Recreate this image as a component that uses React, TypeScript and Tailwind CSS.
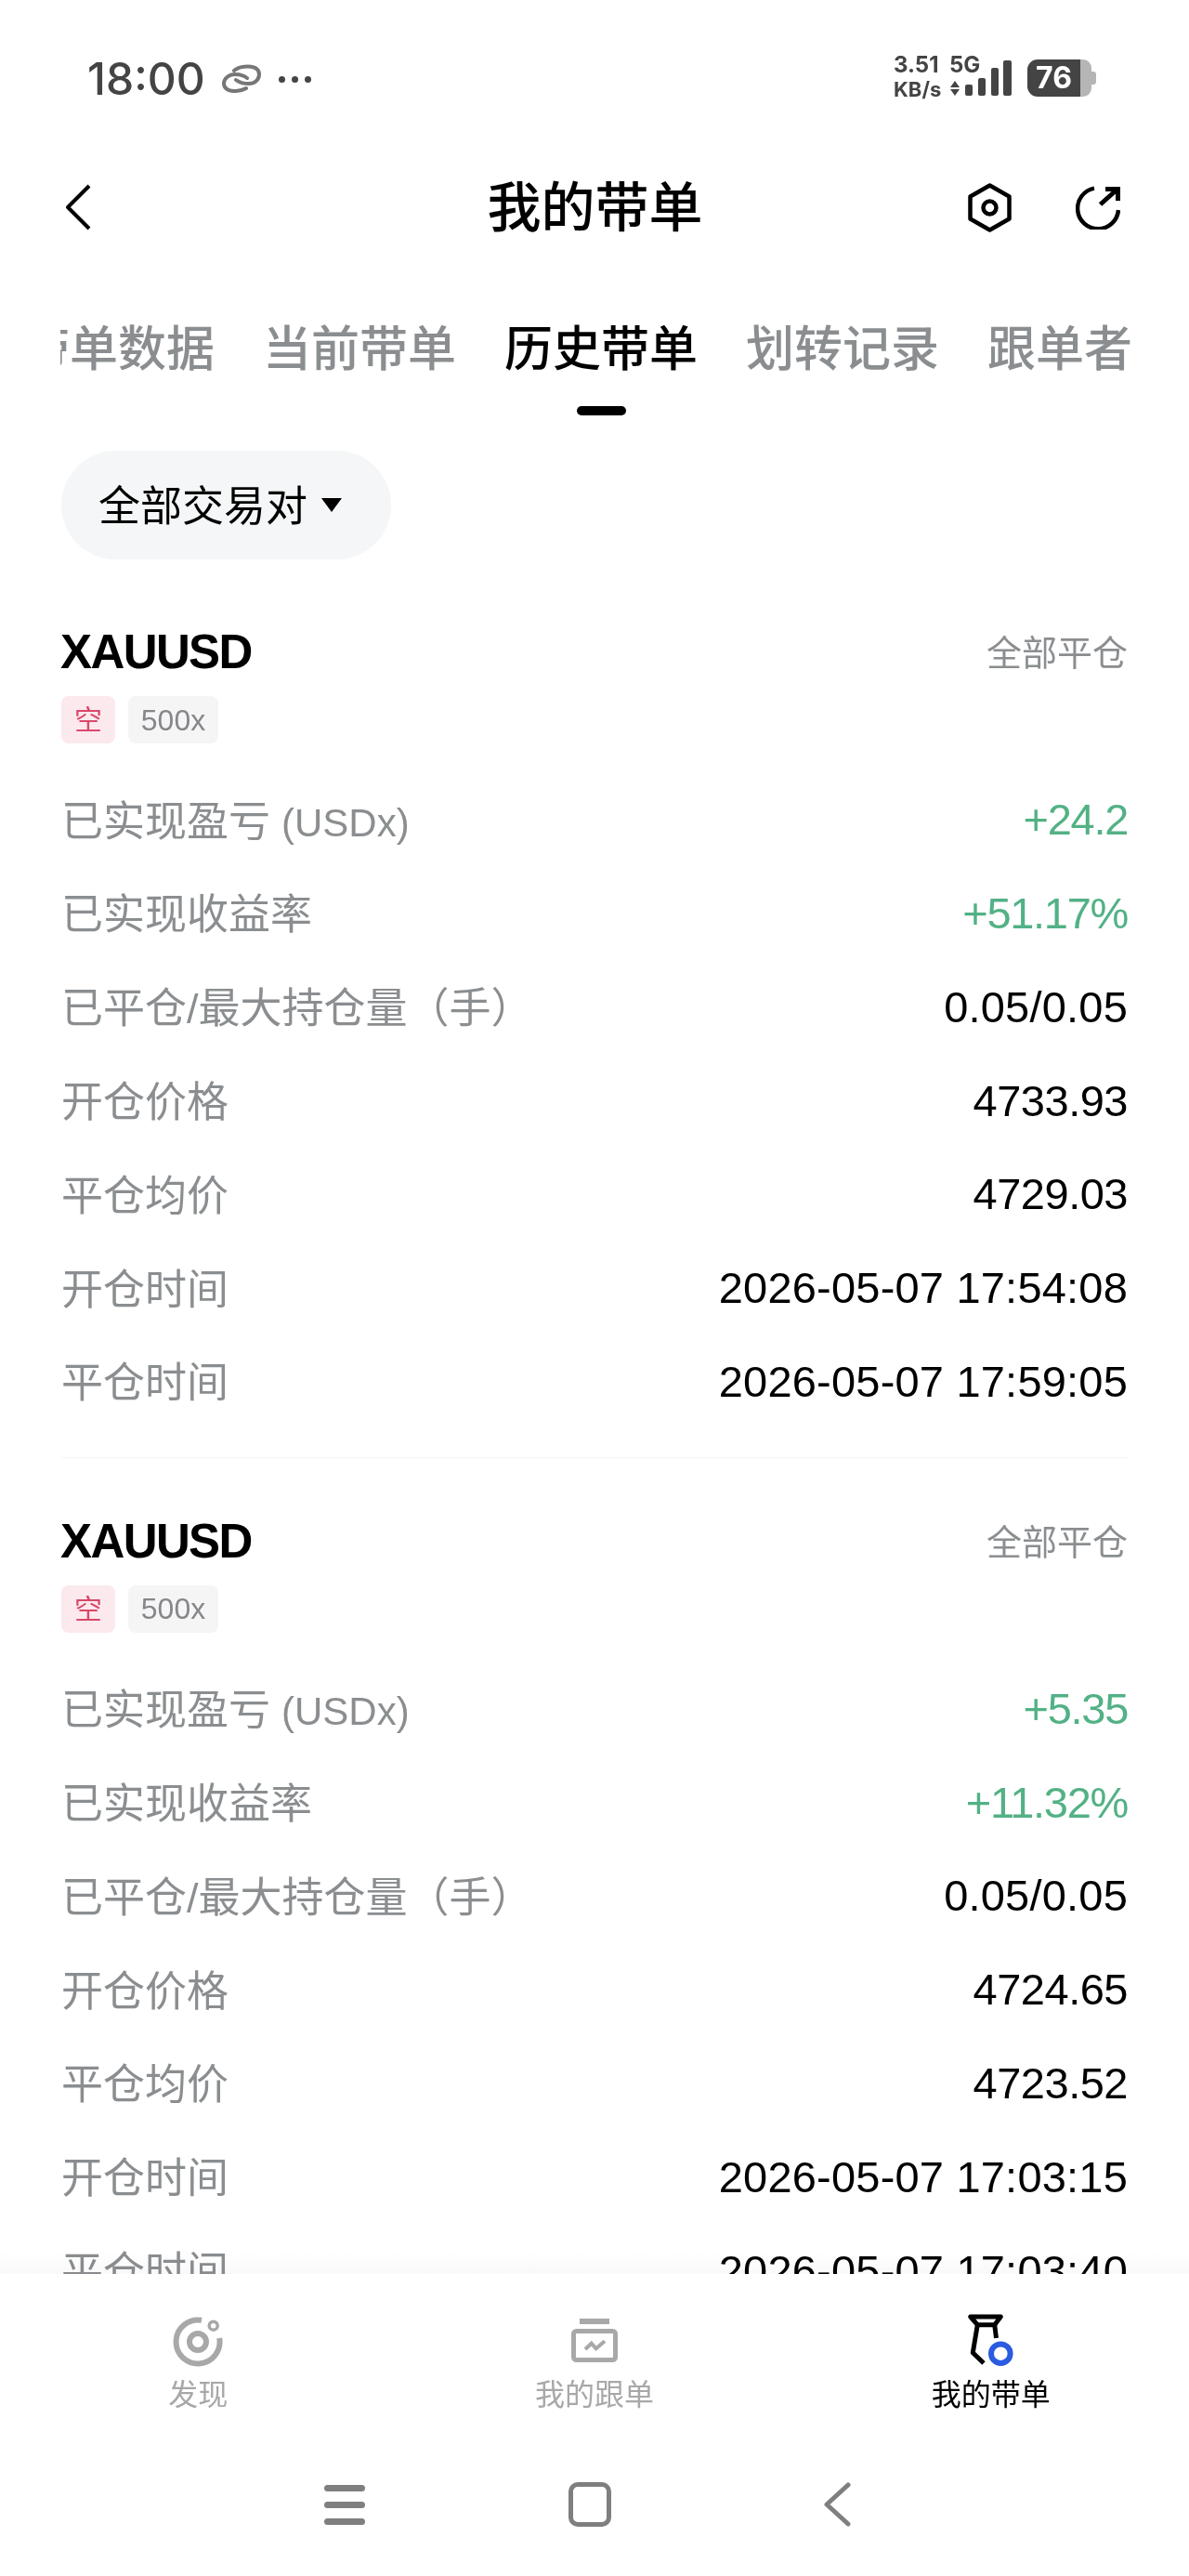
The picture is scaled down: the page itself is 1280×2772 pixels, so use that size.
const FONT = "font-['Liberation_Sans','Noto_Sans_CJK_SC',sans-serif]";

const tabs = ["带单数据", "当前带单", "历史带单", "划转记录", "跟单者"];

const trades = [
  {
    pnl: "+24.2",
    rate: "+51.17%",
    open: "4733.93",
    close: "4729.03",
    openTime: "2026-05-07 17:54:08",
    closeTime: "2026-05-07 17:59:05",
  },
  {
    pnl: "+5.35",
    rate: "+11.32%",
    open: "4724.65",
    close: "4723.52",
    openTime: "2026-05-07 17:03:15",
    closeTime: "2026-05-07 17:03:40",
  },
];

function StatusBar() {
  return (
    <div className="h-[168px] flex items-start justify-between pl-[94px] pr-[100px] pt-[57px] font-['Inter',sans-serif] text-[#444]">
      <div className="flex items-center mt-[3px]">
        <span className="text-[48px] leading-[50px] font-medium">18:00</span>
        <svg width="46" height="38" viewBox="0 0 46 38" fill="none" stroke="#777" strokeWidth="4" strokeLinecap="round" className="ml-[16px]">
          <path d="M15 10Q20 5.5 30 5.5C38 5.5 42 9 42 14C42 20 37 24 31 24C26 24 21 23 17 20" />
          <path d="M28 29Q23 32 15 32C8 32 4 28.5 4 24C4 18 10 14 16 14C21 14 25 15 29 18" />
        </svg>
        <span className="ml-[17px] flex gap-[7px]">
          <i className="size-[7px] rounded-full bg-[#444]" />
          <i className="size-[7px] rounded-full bg-[#444]" />
          <i className="size-[7px] rounded-full bg-[#444]" />
        </span>
      </div>
      <div className="flex items-start">
        <div className="w-[60px] font-bold">
          <div className="text-[24px] leading-[26px]">3.51</div>
          <div className="text-[22px] leading-[26px] whitespace-nowrap">KB/s</div>
        </div>
        <div className="w-0 text-[24px] leading-[26px] font-bold">5G</div>
        <svg width="68" height="40" viewBox="0 0 68 40" fill="#444" className="mt-[7px]">
          <path d="M1 30l5-7 5 7zM1 32h10l-5 7z" />
          <rect x="17" y="27" width="8" height="12" rx="2" />
          <rect x="31" y="20" width="8" height="19" rx="2" />
          <rect x="45" y="9" width="8" height="30" rx="2" />
          <rect x="58" y="1" width="9" height="38" rx="2" />
        </svg>
        <div className="ml-[16px] mt-[7px] h-[40px] flex">
          <div className="w-[57px] h-full bg-[#444] rounded-l-[11px] flex items-center justify-center text-white text-[32px] font-bold">76</div>
          <div className="w-[12px] h-full bg-[#b5b5b5] rounded-r-[9px]" />
          <div className="w-[5px] h-[14px] self-center bg-[#b5b5b5] rounded-r-[3px]" />
        </div>
      </div>
    </div>
  );
}

function TradeCard({ trade, last }: { trade: (typeof trades)[0]; last?: boolean }) {
  const rows = [
    { label: "已实现盈亏", unit: "(USDx)", value: trade.pnl, cls: "text-[#52b185] tracking-[-1.3px]" },
    { label: "已实现收益率", value: trade.rate, cls: "text-[#52b185] tracking-[-1.3px]" },
    { label: "已平仓/最大持仓量（手）", value: "0.05/0.05", cls: "text-black tracking-[0.2px]" },
    { label: "开仓价格", value: trade.open, cls: "text-black tracking-[-0.5px]" },
    { label: "平仓均价", value: trade.close, cls: "text-black tracking-[-0.5px]" },
    { label: "开仓时间", value: trade.openTime, cls: "text-black tracking-[0.2px]" },
    { label: "平仓时间", value: trade.closeTime, cls: "text-black tracking-[0.2px]" },
  ];
  return (
    <div className={last ? "pt-[66px]" : "pt-[66px] pb-[30px] border-b border-[#f3f4f5]"}>
      <div className="flex items-center justify-between h-[48px]">
        <span className="text-[51px] leading-[48px] font-bold text-black tracking-[-1.6px] -ml-[1px]">XAUUSD</span>
        <span className="text-[38px] leading-[48px] pt-[2px] text-[#8b8e90]">全部平仓</span>
      </div>
      <div className="flex gap-[14px] mt-[23px]">
        <span className="h-[51px] w-[58px] rounded-[8px] bg-[#fbe9ed] text-[#d9486a] text-[30px] flex items-center justify-center">空</span>
        <span className="h-[51px] w-[97px] rounded-[8px] bg-[#f5f5f6] text-[#85878a] text-[32px] flex items-center justify-center">500x</span>
      </div>
      <div className="mt-[32px] flex flex-col">
        {rows.map((r) => (
          <div key={r.label} className="h-[100.8px] flex items-center justify-between">
            <span className="text-[45px] pt-[4px] text-[#8b8e90]">
              {r.label}
              {r.unit && <span className="text-[42px] ml-[12px]">{r.unit}</span>}
            </span>
            <span className={`text-[47px] ${r.cls}`}>{r.value}</span>
          </div>
        ))}
      </div>
    </div>
  );
}

export default function App() {
  return (
    <div className={`relative w-[1280px] h-[2772px] overflow-hidden bg-white ${FONT}`}>
      <StatusBar />
      <div className="h-[110px] grid grid-cols-3 items-center pl-[69px] pr-[74px]">
        <svg width="30" height="52" viewBox="0 0 30 52" fill="none" stroke="#000" strokeWidth="4" strokeLinejoin="round">
          <path d="M27 3L4 26l23 23" />
        </svg>
        <span className="text-[58px] font-medium text-black text-center whitespace-nowrap pl-[6px]">我的带单</span>
        <div className="flex gap-[69px] items-center justify-end">
          <svg width="47" height="53" viewBox="0 0 47 53" fill="none" stroke="#000" strokeWidth="4.5" strokeLinejoin="round">
            <path d="M23.5 2.5L44.5 14.5v24L23.5 50.5 2.5 38.5v-24z" />
            <circle cx="23.5" cy="26.5" r="7" />
          </svg>
          <svg width="48" height="47" viewBox="0 0 48 47" fill="none" stroke="#000" strokeWidth="4.5">
            <path d="M20 2.6A22 22 0 1 0 46 26" />
            <path d="M26.5 20L45 3.5M32 3.5h13.5V16" strokeWidth="5" />
          </svg>
        </div>
      </div>
      <div className="mt-[62px] ml-[65px] w-[1157px] overflow-hidden">
        <div className="flex gap-[52px] ml-[-42px] w-[1400px] whitespace-nowrap">
          {tabs.map((t, i) => (
            <div key={t} className="flex flex-col items-center">
              <span className={`text-[52px] leading-[72px] font-medium ${i === 2 ? "text-black" : "text-[#8b8e90]"}`}>{t}</span>
              <span className={`mt-[25px] h-[10px] w-[53px] rounded-full ${i === 2 ? "bg-black" : "bg-transparent"}`} />
            </div>
          ))}
        </div>
      </div>
      <div className="px-[66px] mt-[38px]">
        <div className="flex items-center h-[117px] w-[355px] rounded-full bg-[#f4f6f7] pl-[40px] mb-[10px]">
          <span className="text-[45px] pt-[4px] text-black whitespace-nowrap">全部交易对</span>
          <svg width="22" height="15" viewBox="0 0 22 15" className="ml-[15px]">
            <path d="M0 0h22L11 15z" fill="#000" />
          </svg>
        </div>
        {trades.map((t, i) => (
          <TradeCard key={t.pnl} trade={t} last={i === 1} />
        ))}
      </div>

      <div className="absolute left-0 right-0 top-[2423px] h-[24px] bg-gradient-to-b from-white to-[#f9f9f9] mix-blend-multiply" />
      <div className="absolute left-0 right-0 bottom-0 h-[325px] bg-white">
        <div className="grid grid-cols-3 pt-[43px] h-[172px]">
          <div className="flex flex-col items-center">
            <svg width="60" height="60" viewBox="0 0 60 60" fill="none" stroke="#a8a8a8">
              <path d="M34 6.8A23.5 23.5 0 1 0 53.2 26" strokeWidth="6" />
              <circle cx="30" cy="30" r="9" strokeWidth="6" />
              <circle cx="46.7" cy="12.7" r="4.5" strokeWidth="3.5" />
            </svg>
            <span className="mt-[5px] text-[32px] leading-[44px] text-[#a8a8a8]">发现</span>
          </div>
          <div className="flex flex-col items-center">
            <svg width="52" height="60" viewBox="0 -4 52 60" fill="none">
              <rect x="10" y="1" width="32" height="6" fill="#a8a8a8" />
              <rect x="3.5" y="14.5" width="45" height="31" rx="3" stroke="#a8a8a8" strokeWidth="5" />
              <path d="M16 34l6.7-6.3 5 5.6L37 25.3" stroke="#a8a8a8" strokeWidth="4" />
            </svg>
            <span className="mt-[5px] text-[32px] leading-[44px] text-[#a8a8a8]">我的跟单</span>
          </div>
          <div className="flex flex-col items-center">
            <svg width="56" height="60" viewBox="0 0 56 60" fill="none" stroke="#000" strokeWidth="5" strokeLinejoin="round">
              <path d="M5.7 3H38.3L31.7 11.7H13.3z" />
              <path d="M13.3 11.7L8.3 41.7 20 53" />
              <path d="M31.7 11.7L33.5 26" />
              <circle cx="38.3" cy="42.7" r="10.3" stroke="#2a5be0" strokeWidth="6" />
            </svg>
            <span className="mt-[5px] text-[32px] leading-[44px] text-black">我的带单</span>
          </div>
        </div>
        <div className="flex items-center pl-[349px] mt-[52px]">
          <div className="flex flex-col gap-[11px]">
            <i className="block w-[44px] h-[7px] rounded-full bg-[#7f7f7f]" />
            <i className="block w-[44px] h-[7px] rounded-full bg-[#7f7f7f]" />
            <i className="block w-[44px] h-[7px] rounded-full bg-[#7f7f7f]" />
          </div>
          <div className="ml-[219px] w-[46px] h-[48px] rounded-[10px] border-[5px] border-[#7f7f7f]" />
          <svg width="30" height="48" viewBox="0 0 30 48" fill="none" stroke="#7f7f7f" strokeWidth="5" strokeLinecap="round" strokeLinejoin="round" className="ml-[228px]">
            <path d="M27 3L4 24l23 21" />
          </svg>
        </div>
      </div>
    </div>
  );
}
